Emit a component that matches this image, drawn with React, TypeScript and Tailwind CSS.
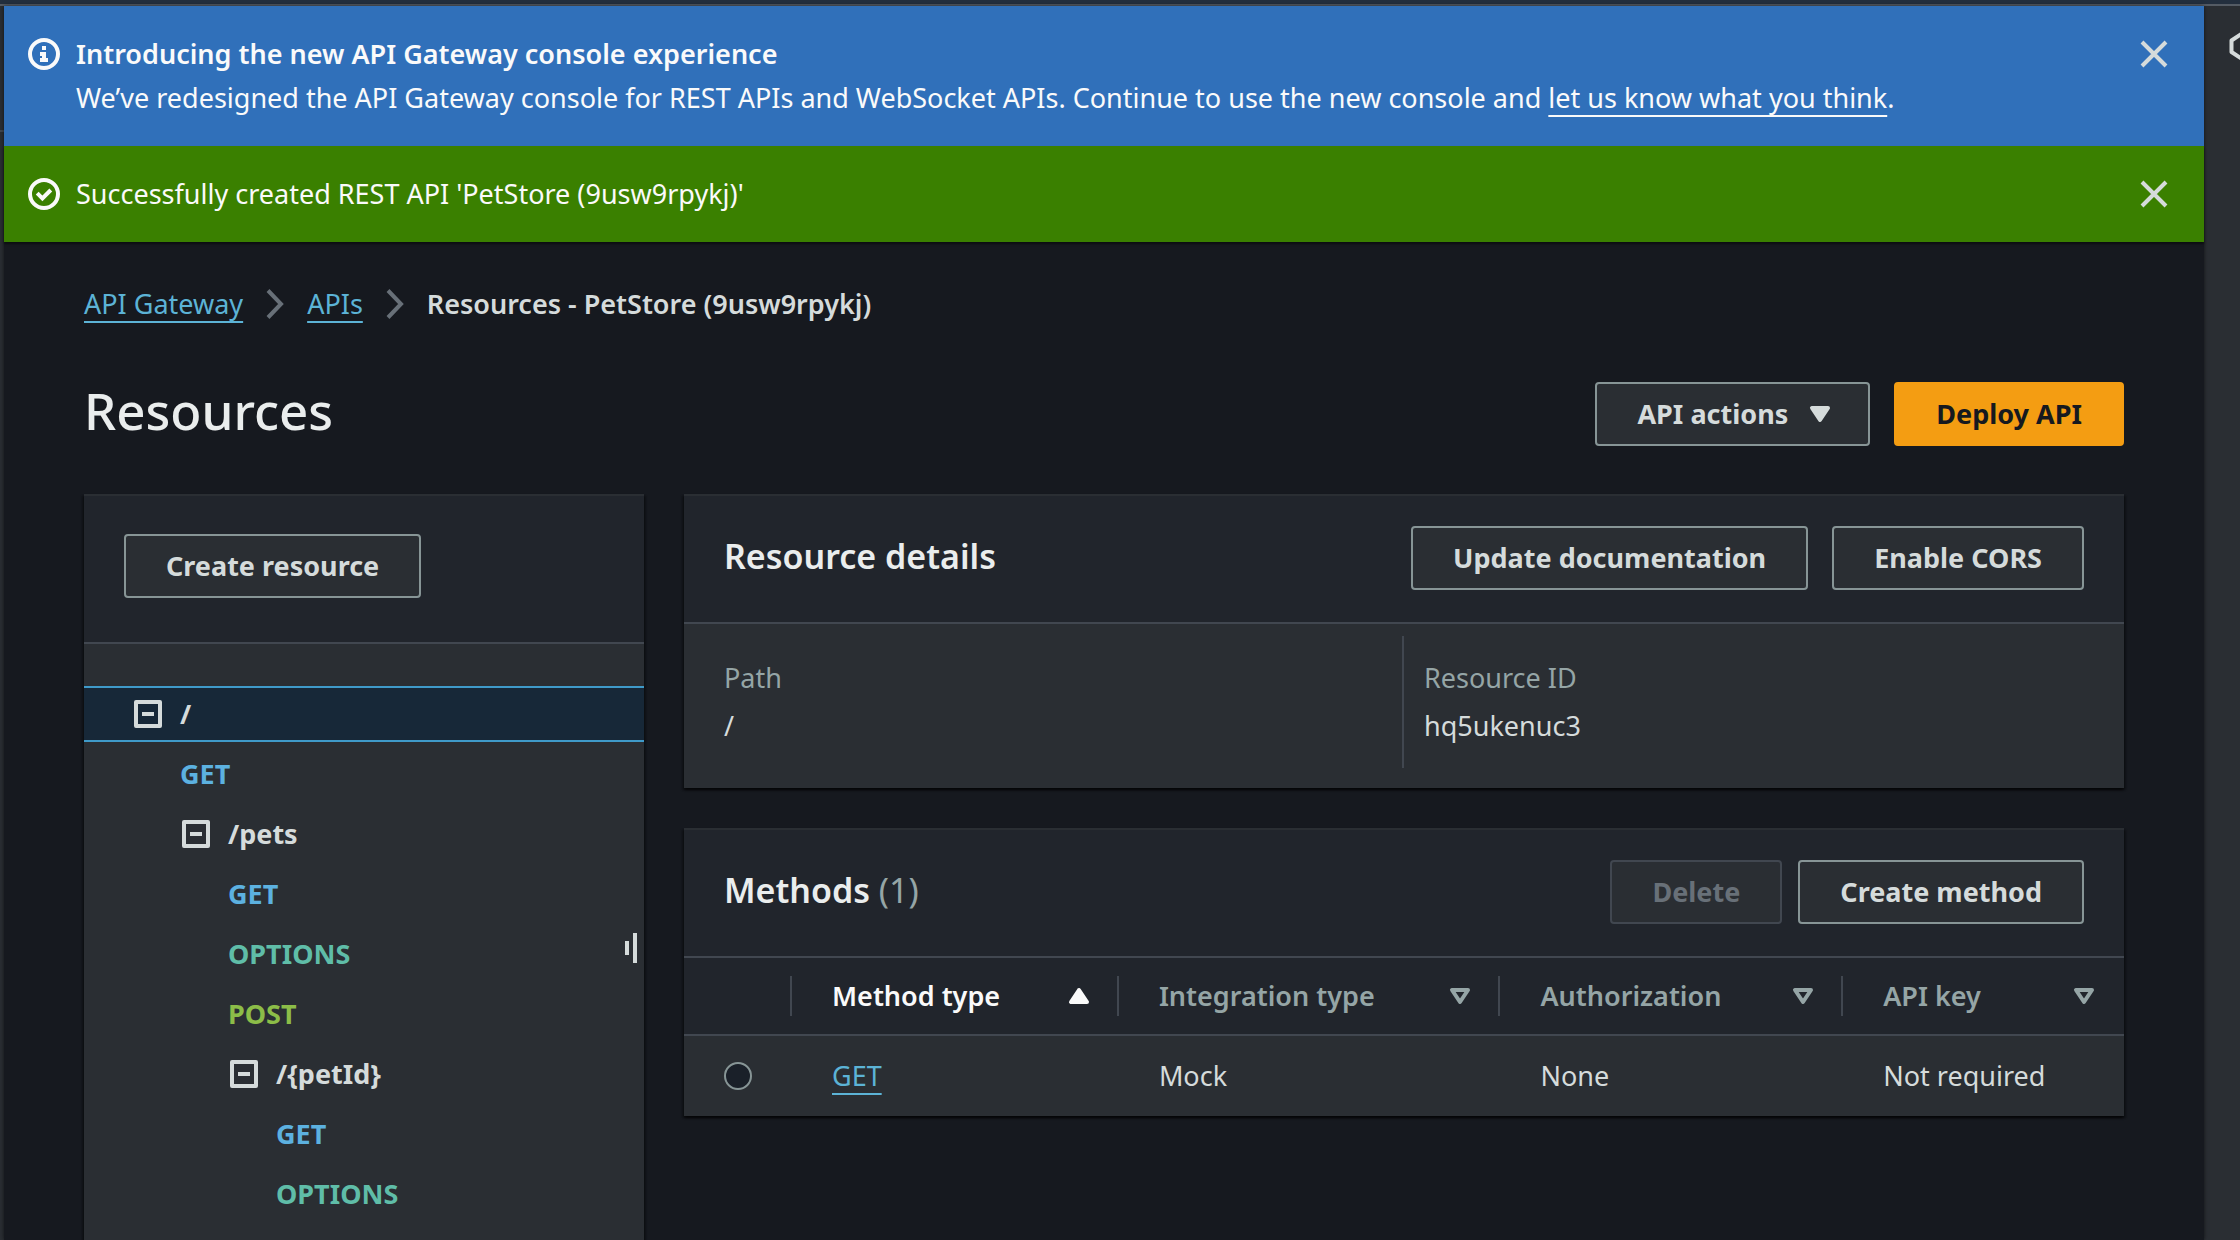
import type { ReactNode } from "react";

type Kind = "path" | "get" | "options" | "post";

const TREE: { label: string; kind: Kind; indent: string; selected?: boolean }[] = [
  { label: "/", kind: "path", indent: "pl-12", selected: true },
  { label: "GET", kind: "get", indent: "pl-24" },
  { label: "/pets", kind: "path", indent: "pl-24" },
  { label: "GET", kind: "get", indent: "pl-36" },
  { label: "OPTIONS", kind: "options", indent: "pl-36" },
  { label: "POST", kind: "post", indent: "pl-36" },
  { label: "/{petId}", kind: "path", indent: "pl-36" },
  { label: "GET", kind: "get", indent: "pl-48" },
  { label: "OPTIONS", kind: "options", indent: "pl-48" },
];

const KIND_COLOR: Record<Kind, string> = {
  path: "text-[#d5dbdb]",
  get: "text-[#5cb1e0]",
  options: "text-[#5fbda8]",
  post: "text-[#8cbd48]",
};

const COLUMNS = [
  { label: "Method type", width: "w-[22.7%]", sorted: true },
  { label: "Integration type", width: "w-[26.5%]", sorted: false },
  { label: "Authorization", width: "w-[23.8%]", sorted: false },
  { label: "API key", width: "", sorted: false },
];

const PANEL =
  "border-t-2 border-[#2a2e33] bg-[#2a2e33] shadow-[0_2px_2px_rgba(0,0,0,0.5),2px_2px_2px_rgba(0,0,0,0.3),-2px_2px_2px_rgba(0,0,0,0.3)]";

function Icon({ children, className = "" }: { children: ReactNode; className?: string }) {
  return (
    <svg viewBox="0 0 16 16" className={`size-8 shrink-0 ${className}`} fill="none" stroke="currentColor" strokeWidth={2} aria-hidden="true">
      {children}
    </svg>
  );
}

function Button({ children, variant = "normal" }: { children: ReactNode; variant?: "normal" | "primary" | "disabled" }) {
  const look = {
    normal: "border-[#879596] bg-[#2a2e33] text-[#d5dbdb]",
    primary: "border-[#f49d12] bg-[#f49d12] text-[#16191f]",
    disabled: "border-[#414750] bg-[#2a2e33] text-[#687078]",
  }[variant];
  return (
    <button
      type="button"
      disabled={variant === "disabled"}
      className={`flex h-16 shrink-0 items-center gap-4 rounded border-2 px-10 font-bold whitespace-nowrap ${look}`}
    >
      {children}
    </button>
  );
}

function Flash({ color, icon, children }: { color: string; icon: ReactNode; children: ReactNode }) {
  return (
    <div role="status" className={`flex items-start gap-4 py-[26px] pr-[34px] pl-6 text-[#fafafa] ${color}`}>
      <span className="flex h-11 items-center">{icon}</span>
      <div className="flex-1">{children}</div>
      <button type="button" aria-label="Dismiss" className="flex h-11 items-center text-[#d5dbdb]">
        <Icon>
          <path d="M2 2l12 12M14 2L2 14" />
        </Icon>
      </button>
    </div>
  );
}

function Link({ children, color = "text-[#5cb3d6]" }: { children: ReactNode; color?: string }) {
  return (
    <a href="#" className={`underline decoration-2 underline-offset-[7px] ${color}`}>
      {children}
    </a>
  );
}

function Chevron() {
  return (
    <li aria-hidden="true">
      <svg viewBox="0 0 18 30" className="h-[30px] w-[18px] text-[#687078]" fill="none" stroke="currentColor" strokeWidth={4}>
        <path d="M2 1.5L15 15L2 28.5" />
      </svg>
    </li>
  );
}

function PanelHeader({ title, count, children }: { title: string; count?: string; children: ReactNode }) {
  return (
    <div className="flex items-start justify-between border-b-2 border-[#414750] bg-[#21252c] px-10 pt-[30px] pb-8">
      <h2 className="text-[34px] leading-[60px] font-semibold text-[#eaeded]">
        {title}
        {count && <span className="font-normal text-[#95a5a6]"> {count}</span>}
      </h2>
      {children}
    </div>
  );
}

function Field({ label, value, className = "" }: { label: string; value: string; className?: string }) {
  return (
    <div className={`flex flex-col gap-1 py-5 ${className}`}>
      <dt className="text-[#95a5a6]">{label}</dt>
      <dd>{value}</dd>
    </div>
  );
}

function ResourceTree() {
  return (
    <section className={`relative w-[560px] shrink-0 ${PANEL}`}>
      <div className="flex border-b-2 border-[#414750] bg-[#21252c] px-10 pt-[38px] pb-11">
        <Button>Create resource</Button>
      </div>
      <ul className="flex flex-col gap-1 pt-[42px]">
        {TREE.map((node, i) => (
          <li
            key={i}
            className={`flex h-14 items-center gap-4 border-y-2 font-bold ${node.indent} ${KIND_COLOR[node.kind]} ${
              node.selected ? "border-[#3f9ac9] bg-[#172838]" : "border-transparent"
            }`}
          >
            {node.kind === "path" && (
              <button type="button" aria-label={`Collapse ${node.label}`}>
                <Icon>
                  <path d="M2 2h12v12H2zM5 8h6" strokeLinejoin="round" />
                </Icon>
              </button>
            )}
            {node.label}
          </li>
        ))}
      </ul>
      <button type="button" aria-label="Resize panel" className="absolute top-[437px] right-[7px] flex items-center gap-1">
        <span className="h-[14px] w-1 bg-[#d5dbdb]" />
        <span className="h-[30px] w-1 bg-[#d5dbdb]" />
      </button>
    </section>
  );
}

function MethodsTable() {
  return (
    <table className="w-full table-fixed border-separate border-spacing-0">
      <thead>
        <tr className="h-[78px] bg-[#21252c]">
          <th className="w-[108px] border-b-2 border-[#414750] p-0">
            <div className="h-10 border-r-2 border-[#414750]" />
          </th>
          {COLUMNS.map((c) => (
            <th key={c.label} className={`border-b-2 border-[#414750] p-0 ${c.width}`} aria-sort={c.sorted ? "ascending" : "none"}>
              <button
                type="button"
                className={`flex h-10 w-full items-center justify-between border-r-2 pr-[22px] pl-10 font-semibold ${
                  c.width ? "border-[#414750]" : "border-transparent"
                } ${c.sorted ? "text-[#fafafa]" : "text-[#95a5a6]"}`}
              >
                {c.label}
                <Icon>
                  {c.sorted ? (
                    <path d="M4 11h8L8 5z" fill="currentColor" strokeLinejoin="round" />
                  ) : (
                    <path d="M4 5h8l-4 6z" strokeLinejoin="round" />
                  )}
                </Icon>
              </button>
            </th>
          ))}
        </tr>
      </thead>
      <tbody>
        <tr className="h-20">
          <td className="p-0 pl-10">
            <input
              type="radio"
              name="method"
              aria-label="Select GET"
              className="block size-7 appearance-none rounded-full border-2 border-[#879596] bg-[#1a2029]"
            />
          </td>
          <td className="p-0 pl-10">
            <Link>GET</Link>
          </td>
          <td className="p-0 pl-10">Mock</td>
          <td className="p-0 pl-10">None</td>
          <td className="p-0 pl-10">Not required</td>
        </tr>
      </tbody>
    </table>
  );
}

export default function App() {
  return (
    <div className="flex min-h-screen flex-col bg-[#2a2e33] font-['Noto_Sans',sans-serif] text-[27px] leading-[44px] text-[#d5dbdb]">
      <header className="h-[6px] border-b-2 border-[#545b64] bg-[#232f3e]" />
      <div className="flex flex-1">
        <div className="w-1 shrink-0">
          <div className="h-[126px] border-b-2 border-[#414750]" />
        </div>
        <main className="flex min-w-0 flex-1 flex-col bg-[#16191f] shadow-[0_0_4px_rgba(0,0,0,0.6)]">
          <Flash
            color="bg-[#3070ba]"
            icon={
              <Icon>
                <circle cx="8" cy="8" r="7" />
                <path d="M7 4h2v2H7zM6 7h3v3h1v2H6v-2h1V9H6z" fill="currentColor" stroke="none" />
              </Icon>
            }
          >
            <h2 className="font-semibold">Introducing the new API Gateway console experience</h2>
            <p>
              We’ve redesigned the API Gateway console for REST APIs and WebSocket APIs. Continue to use the new console and{" "}
              <Link color="text-[#fafafa]">let us know what you think</Link>.
            </p>
          </Flash>
          <div className="shadow-[0_2px_2px_rgba(0,0,0,0.5)]">
            <Flash
              color="bg-[#3a8000]"
              icon={
                <Icon>
                  <circle cx="8" cy="8" r="7" />
                  <path d="M4.6 7.6l2.6 2.6L11.4 6" />
                </Icon>
              }
            >
              <p>Successfully created REST API 'PetStore (9usw9rpykj)'</p>
            </Flash>
          </div>

          <div className="flex flex-1 flex-col px-20 pt-10">
            <nav aria-label="Breadcrumbs">
              <ol className="flex items-center gap-[23px]">
                <li>
                  <Link>API Gateway</Link>
                </li>
                <Chevron />
                <li>
                  <Link>APIs</Link>
                </li>
                <Chevron />
                <li className="font-semibold">Resources - PetStore (9usw9rpykj)</li>
              </ol>
            </nav>

            <div className="mt-14 flex items-start justify-between">
              <h1 className="text-[51px] leading-[56px] font-medium text-[#eaeded]">Resources</h1>
              <div className="flex gap-6">
                <Button>
                  API actions
                  <Icon className="-mr-2">
                    <path d="M4 5h8l-4 6z" fill="currentColor" strokeLinejoin="round" />
                  </Icon>
                </Button>
                <Button variant="primary">Deploy API</Button>
              </div>
            </div>

            <div className="mt-12 flex flex-1 gap-10">
              <ResourceTree />
              <div className="flex min-w-0 flex-1 flex-col gap-10">
                <section className={PANEL}>
                  <PanelHeader title="Resource details">
                    <div className="flex gap-6">
                      <Button>Update documentation</Button>
                      <Button>Enable CORS</Button>
                    </div>
                  </PanelHeader>
                  <dl className="grid grid-cols-2 pt-3 pr-11 pb-5 pl-10">
                    <Field label="Path" value="/" />
                    <Field label="Resource ID" value="hq5ukenuc3" className="border-l-2 border-[#414750] pl-5" />
                  </dl>
                </section>
                <section className={PANEL}>
                  <PanelHeader title="Methods" count="(1)">
                    <div className="flex gap-4">
                      <Button variant="disabled">Delete</Button>
                      <Button>Create method</Button>
                    </div>
                  </PanelHeader>
                  <MethodsTable />
                </section>
              </div>
            </div>
          </div>
        </main>
        <aside className="w-9 shrink-0 overflow-hidden pt-[22px] pl-6">
          <button type="button" aria-label="Open info panel" className="block text-[#d5dbdb]">
            <svg viewBox="0 0 36 36" className="size-9 max-w-none" fill="none" stroke="currentColor" strokeWidth={4} strokeLinejoin="round" aria-hidden="true">
              <path d="M3.5 12.5L18 3l14.5 9.5V24L18 33.5L3.5 24z" />
            </svg>
          </button>
        </aside>
      </div>
    </div>
  );
}
